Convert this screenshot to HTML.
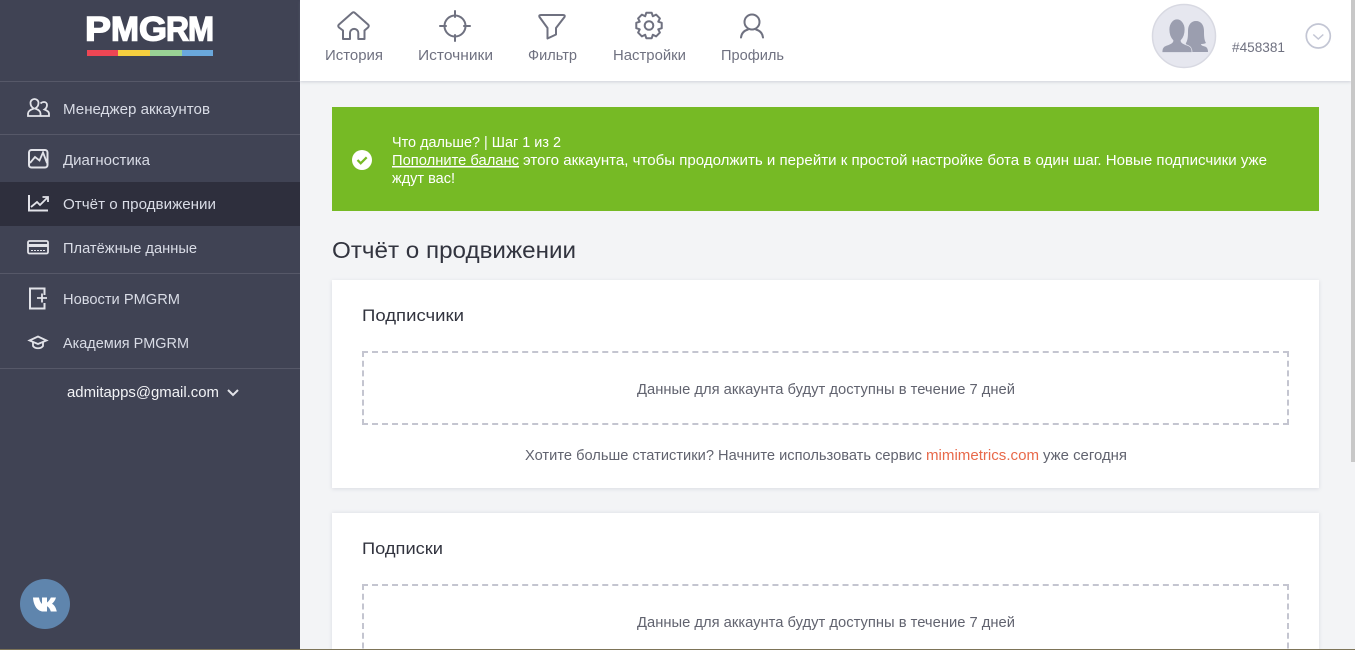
<!DOCTYPE html>
<html lang="ru"><head><meta charset="utf-8"><title>PMGRM</title>
<style>
html,body{margin:0;padding:0;width:1355px;height:650px;overflow:hidden;background:#f3f4f6}
div{position:absolute}
#root{left:0;top:0;width:1355px;height:650px;overflow:hidden;background:#f3f4f6}
svg{position:absolute;left:0;top:0}
text{font-family:"Liberation Sans",sans-serif;font-size:15px}
</style></head><body>
<div id="root">
<div style="left:0;top:0;width:300px;height:650px;background:#404354"></div>
<div style="left:0;top:182px;width:300px;height:44px;background:#2e2f3d"></div>
<div style="left:0;top:81px;width:300px;height:1px;background:#565868"></div>
<div style="left:0;top:134px;width:300px;height:1px;background:#565868"></div>
<div style="left:0;top:273px;width:300px;height:1px;background:#565868"></div>
<div style="left:0;top:368px;width:300px;height:1px;background:#565868"></div>
<div style="left:300px;top:0;width:1051px;height:81px;background:#fff;box-shadow:0 1px 3px rgba(120,125,150,.3)"></div>
<div style="left:332px;top:107px;width:987px;height:104px;background:#76ba25"></div>
<div style="left:332px;top:280px;width:987px;height:208px;background:#fff;box-shadow:0 1px 4px rgba(120,125,150,.2)"></div>
<div style="left:332px;top:513px;width:987px;height:137px;background:#fff;box-shadow:0 0 4px rgba(120,125,150,.2)"></div>
<div style="left:362px;top:351px;width:923px;height:70px;border:2px dashed #c4c5d0"></div>
<div style="left:362px;top:584px;width:923px;height:80px;border:2px dashed #c4c5d0"></div>
<div style="left:1351px;top:0;width:4px;height:462px;background:#c8c8c8"></div>
<div style="left:0;top:649px;width:1355px;height:1px;background:#7d7458"></div>

<svg width="1355" height="650" viewBox="0 0 1355 650">
<!-- logo -->
<g fill="#fff" stroke="#fff" stroke-width="1.400" style="font-weight:700">
<text x="85" y="40.500" textLength="26" lengthAdjust="spacingAndGlyphs" style="font-size:34px;font-weight:700">P</text>
<text x="111" y="40.500" textLength="28" lengthAdjust="spacingAndGlyphs" style="font-size:34px;font-weight:700">M</text>
<text x="139" y="40.500" textLength="28" lengthAdjust="spacingAndGlyphs" style="font-size:34px;font-weight:700">G</text>
<text x="166" y="40.500" textLength="23" lengthAdjust="spacingAndGlyphs" style="font-size:34px;font-weight:700">R</text>
<text x="188" y="40.500" textLength="26" lengthAdjust="spacingAndGlyphs" style="font-size:34px;font-weight:700">M</text>
</g>
<rect x="87" y="50" width="31" height="6" fill="#ee4654"/><rect x="118" y="50" width="32" height="6" fill="#f6cf3f"/><rect x="150" y="50" width="32" height="6" fill="#9ad295"/><rect x="182" y="50" width="31" height="6" fill="#6aa8dc"/>

<!-- sidebar icons -->
<g fill="none" stroke="#e2e3e9" stroke-width="1.800">
<path d="M28 116v-2.500c0-2.500 3-4 6-5-2-1-3.500-3-3.500-5.500 0-2.500 2-4 4-4s4 1.500 4 4c0 2.500-1.500 4.500-3.500 5.500 3 1 5.500 2.500 5.500 5V116z"/>
<path d="M41 116h8v-2.500c0-2-2-3-4.500-4 1.500-1 2.500-2.500 2.500-4.500s-1.500-3-3-3-2.500.5-3.500 1.500"/>
<rect x="29" y="150" width="18.500" height="17.500" rx="2.500" stroke-width="2"/>
<path d="M30 163l5-6 4.500 3.500 3.500-8 4 10.500"/>
<path d="M29 195v15.500h19" stroke-width="2"/>
<path d="M31 207l6-5 3 3 7-7"/><path d="M42.500 197h5.500v5"/>
<rect x="28" y="241" width="20" height="12.500" rx="1.500"/>
<path d="M28 245.500h20" stroke-width="3"/><path d="M31 250.500h14" stroke-width="1" stroke-dasharray="2 1"/>
<path d="M44.500 295v-6.500H30v20h14.500V303" stroke-width="2"/><path d="M37 298h10M42 293.500v9" stroke-width="1.800"/>
<path d="M29.500 340.500l8.500-4 8.500 4-8.500 3.500z"/><path d="M33 342.500v3.500c2 3 8 3 10 0v-3.500"/>
<path d="M228 390l5 5 5-5" stroke-width="2"/>
</g>
<!-- sidebar text -->
<g fill="#d9dce6">
<text x="63" y="114" textLength="147" lengthAdjust="spacingAndGlyphs">Менеджер аккаунтов</text>
<text x="63" y="165" textLength="87" lengthAdjust="spacingAndGlyphs">Диагностика</text>
<text x="63" y="209" textLength="153" lengthAdjust="spacingAndGlyphs">Отчёт о продвижении</text>
<text x="63" y="253" textLength="134" lengthAdjust="spacingAndGlyphs">Платёжные данные</text>
<text x="63" y="304" textLength="117" lengthAdjust="spacingAndGlyphs">Новости PMGRM</text>
<text x="63" y="348" textLength="126" lengthAdjust="spacingAndGlyphs">Академия PMGRM</text>
<text x="67" y="397" textLength="152" lengthAdjust="spacingAndGlyphs" fill="#f2f3f6">admitapps@gmail.com</text>
</g>
<!-- vk -->
<circle cx="45" cy="604" r="25" fill="#5f85ad"/>
<path d="M33 597.500h6c.5 3 1.500 5 3 6.500v-6.500h5v5c1.500-1 3-3 3.800-5h5.200c-.8 3-2.500 5-4 6.200 2 1 3.800 3.300 4.800 7.800h-6c-.7-2.500-2-4.500-3.800-5.300v5.300h-3C38 612 33.500 606 33 597.500z" fill="#fff"/>

<!-- top nav icons -->
<g fill="none" stroke="#6f7180" stroke-width="2" stroke-linejoin="round" stroke-linecap="round">
<path d="M343 30.500V39h7v-6a4 4 0 0 1 8.300 0v6H364.500V30.500L368 27.500q1.500-1.500 0-3L355 13q-1.500-1.500-3 0L339 24.500q-1.500 1.500 0 3z"/>
<circle cx="455" cy="26" r="10.500"/><path d="M455 11v6M455 35v6M440 26h6M464 26h6"/>
<path d="M541 15h22q2.500 0 1.500 2L556 28v6.500l-8.500 4V28L539.500 17q-1-2 1.500-2z"/>
<circle cx="649" cy="25.500" r="4.300"/>
<path stroke-width="2" transform="translate(649 25.500)" d="M12.720 -2.700L12.720 2.700 9.240 3.830 10.900 7.080 7.080 10.900 3.830 9.240 2.700 12.720 -2.700 12.720 -3.830 9.240 -7.080 10.900 -10.900 7.080 -9.240 3.830 -12.720 2.700 -12.720 -2.700 -9.240 -3.830 -10.900 -7.080 -7.080 -10.900 -3.830 -9.240 -2.700 -12.720 2.700 -12.720 3.830 -9.240 7.080 -10.900 10.900 -7.080 9.240 -3.830z"/>
<circle cx="752" cy="22" r="7.500"/><path d="M741 37.500c.5-4.500 3.500-7 7-8M763 37.500c-.5-4.500-3.500-7-7-8"/>
</g>
<!-- top nav text -->
<g fill="#6f7180">
<text x="325" y="60" textLength="58" lengthAdjust="spacingAndGlyphs">История</text>
<text x="418" y="60" textLength="75" lengthAdjust="spacingAndGlyphs">Источники</text>
<text x="528" y="60" textLength="49" lengthAdjust="spacingAndGlyphs">Фильтр</text>
<text x="613" y="60" textLength="73" lengthAdjust="spacingAndGlyphs">Настройки</text>
<text x="721" y="60" textLength="63" lengthAdjust="spacingAndGlyphs">Профиль</text>
<text x="1232" y="52" textLength="53" lengthAdjust="spacingAndGlyphs" style="font-size:14px">#458381</text>
</g>
<!-- avatar -->
<circle cx="1184" cy="36" r="31.500" fill="#e6e7ef" stroke="#d8d9e2" stroke-width="1.500"/>
<path d="M1186 43c2-3 2-8 2-12 0-6 3-10 8-10s8 4 8 10c0 4 0 9 2 12-2 1-4 1-5 1 0 2 3 2 5 3 1.500 1 2 3 2 5h-24z" fill="#9b9eaf"/>
<path d="M1162 52.500c0-4 1-6 4-7 4-1.500 7-2.500 7-5-2.500-2.500-4-6-4-11 0-6.500 4-10.500 8-10.500s8 4 8 10.500c0 5-1.500 8.500-4 11 0 2.500 3 3.500 7 5 3 1 4 3 4 7z" fill="#9b9eaf" stroke="#e6e7ef" stroke-width=".8"/>
<circle cx="1318.300" cy="36" r="12" fill="none" stroke="#c3c6d4" stroke-width="1.700"/>
<path d="M1313.300 34.500l5 4.500 5-4.500" fill="none" stroke="#c3c6d4" stroke-width="1.500"/>

<!-- alert -->
<circle cx="362" cy="160" r="10" fill="#fff"/>
<path d="M357.500 160l3.200 3.300 6-6" fill="none" stroke="#76ba25" stroke-width="2.200"/>
<g fill="#fff">
<text x="392" y="147" textLength="169" lengthAdjust="spacingAndGlyphs">Что дальше? | Шаг 1 из 2</text>
<text x="392" y="165" textLength="127" lengthAdjust="spacingAndGlyphs" text-decoration="underline">Пополните баланс</text>
<text x="523" y="165" textLength="744" lengthAdjust="spacingAndGlyphs">этого аккаунта, чтобы продолжить и перейти к простой настройке бота в один шаг. Новые подписчики уже</text>
<text x="392" y="183" textLength="63" lengthAdjust="spacingAndGlyphs">ждут вас!</text>
</g>
<!-- headings -->
<text x="332" y="258" textLength="244" lengthAdjust="spacingAndGlyphs" fill="#32343f" style="font-size:23px">Отчёт о продвижении</text>
<text x="362" y="321" textLength="102" lengthAdjust="spacingAndGlyphs" fill="#32343f" style="font-size:17px">Подписчики</text>
<text x="362" y="554" textLength="81" lengthAdjust="spacingAndGlyphs" fill="#32343f" style="font-size:17px">Подписки</text>
<g fill="#61636f">
<text x="637" y="394" textLength="378" lengthAdjust="spacingAndGlyphs">Данные для аккаунта будут доступны в течение 7 дней</text>
<text x="637" y="627" textLength="378" lengthAdjust="spacingAndGlyphs">Данные для аккаунта будут доступны в течение 7 дней</text>
<text x="525" y="460" textLength="397" lengthAdjust="spacingAndGlyphs">Хотите больше статистики? Начните использовать сервис</text>
<text x="926" y="460" textLength="113" lengthAdjust="spacingAndGlyphs" fill="#e8694a">mimimetrics.com</text>
<text x="1043" y="460" textLength="84" lengthAdjust="spacingAndGlyphs">уже сегодня</text>
</g>
</svg>
</div>
</body></html>
